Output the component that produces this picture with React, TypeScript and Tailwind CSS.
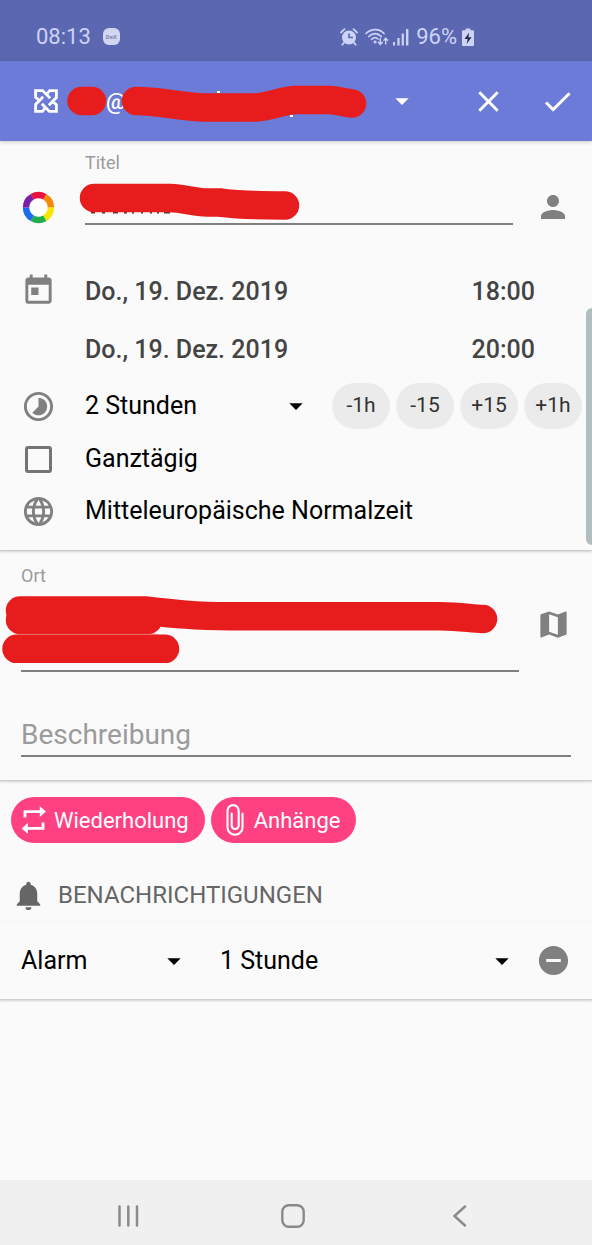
import type { ReactNode } from "react";
import {
  MdArrowDropDown,
  MdCheck,
  MdClose,
  MdLanguage,
  MdMap,
  MdNotifications,
  MdPerson,
  MdRemoveCircle,
  MdTimelapse,
  MdToday,
} from "react-icons/md";

function StatusBar() {
  return (
    <div className="flex h-[61px] items-center bg-[#5b68b1] px-9 pt-3 text-[22px] text-[#ccd3f4]">
      <span>08:13</span>
      <span className="ml-3 flex h-[17px] w-[17px] items-center justify-center rounded-md bg-[#d2d6f0] text-[6px] font-bold text-[#7d86b8]">
        DeX
      </span>
      <div className="ml-auto mr-[82px] flex items-center">
        <svg className="h-[18px] w-[18px]" viewBox="0 0 18 18" fill="currentColor" aria-hidden="true">
          <path
            fillRule="evenodd"
            d="M9 2.5a7 7 0 1 1 0 14a7 7 0 0 1 0-14ZM8.2 5.5V10.3H13V8.7H9.8V5.5Z"
          />
          <path
            d="M1 4.5L4.5 1.2M17 4.5L13.5 1.2M4.2 14.5L2.3 16.8M13.8 14.5L15.7 16.8"
            stroke="currentColor"
            strokeWidth="1.8"
            strokeLinecap="round"
          />
        </svg>
        <svg className="ml-[7px] h-[18px] w-6" viewBox="0 0 24 18" fill="none" stroke="currentColor" strokeWidth="1.7" strokeLinecap="round" aria-hidden="true">
          <path d="M1 5.5C6.5 .2 14.5 .2 19 5.5M3.8 8.5C7.6 4.6 12.6 4.6 16.2 8.5M6.6 11.3C8.8 9.3 11.2 9.3 13 11" />
          <circle cx="10" cy="14" r="1.2" fill="currentColor" strokeWidth="0.6" />
          <path d="M15.3 10.5V16M13.3 14.3L15.3 16.5L17.3 14.3M20.7 16V10.5M18.9 12.2L20.7 10.2L22.6 12.2" strokeWidth="1.4" />
        </svg>
        <svg className="ml-1 h-[18px] w-4" viewBox="0 0 16 18" fill="currentColor" aria-hidden="true">
          <rect x="0" y="14" width="2" height="3.5" />
          <rect x="4.4" y="10" width="2.2" height="7.5" />
          <rect x="8.7" y="5.5" width="2.2" height="12" />
          <rect x="13" y="1" width="2.4" height="16.5" />
        </svg>
        <span className="ml-[7px]">96%</span>
        <svg className="ml-[5px] h-[18px] w-3" viewBox="0 0 12 18" aria-hidden="true">
          <path d="M1 2.2H3.6V.5H8.4V2.2H11Q12 2.2 12 3.2V17Q12 18 11 18H1Q0 18 0 17V3.2Q0 2.2 1 2.2Z" fill="currentColor" />
          <path d="M7.2 4.5L2.5 11H5.7L4.6 16L9.6 9.2H6.4Z" fill="#272c4c" />
        </svg>
      </div>
    </div>
  );
}

function AccountLogo() {
  return (
    <svg className="h-6 w-6 shrink-0" viewBox="0 0 24 24" fill="none" stroke="#fff" strokeWidth="2.8" aria-hidden="true">
      {[0, 90, 180, 270].map((angle) => (
        <path key={angle} transform={`rotate(${angle} 12 12)`} d="M6.2 12L1.600 8.400V1.600H8.600L16.200 9.200" />
      ))}
    </svg>
  );
}

function AppBar() {
  return (
    <header className="relative z-10 flex h-20 items-center bg-[#6b7bd7] pl-[34px] pr-[17px] text-white shadow-[0_1px_4px_rgba(0,0,0,0.2)]">
      <AccountLogo />
      <div className="relative ml-2 flex h-12 flex-1 items-center">
        <select aria-label="Konto" className="h-full w-full appearance-none bg-transparent pl-10 text-[22px] font-medium outline-none">
          <option>@</option>
        </select>
        <MdArrowDropDown className="pointer-events-none absolute right-[6px] h-8 w-8" />
        <svg className="pointer-events-none absolute left-0 top-0 h-12 w-[304px]" viewBox="66 77 304 48" fill="none" stroke="#e71d1d" strokeWidth="28.5" strokeLinecap="round" strokeLinejoin="round" aria-hidden="true">
          <path d="M217 92h3M290 116h3" stroke="#fff" strokeWidth="2" strokeLinecap="butt" />
          <path d="M81.5 101H92" />
          <path d="M136 101C160 101 180 107 205 107.5H255C270 107 280 101 295 100H330C340 100.5 344 103 352 103.5" />
        </svg>
      </div>
      <button type="button" aria-label="Abbrechen" className="ml-[47px]">
        <MdClose className="h-[35px] w-[35px]" />
      </button>
      <button type="button" aria-label="Speichern" className="ml-[34px]">
        <MdCheck className="h-[35px] w-[35px]" />
      </button>
    </header>
  );
}

function Section({ children, className }: { children: ReactNode; className: string }) {
  return (
    <section className={`border-b border-[#cfcfcf] shadow-[0_1px_2px_rgba(0,0,0,0.16)] ${className}`}>
      {children}
    </section>
  );
}

function ColorWheel() {
  const colors = ["#f58a07", "#f7e600", "#1fae4b", "#1c6bf0", "#7a1fa8", "#ea1040"];
  return (
    <svg className="h-[35px] w-[35px]" viewBox="0 0 35 35" fill="none" strokeWidth="6.5" aria-hidden="true">
      <circle cx="17.5" cy="17.5" r="10" fill="#fff" />
      {colors.map((color, i) => (
        <path
          key={color}
          d="M23.7 6.7A12.4 12.4 0 0 1 29.9 17.5"
          stroke={color}
          transform={`rotate(${i * 60} 17.5 17.5)`}
        />
      ))}
    </svg>
  );
}

function DateRow({ label, date, time, icon }: { label: string; date: string; time: string; icon?: ReactNode }) {
  return (
    <div className="flex h-[58px] items-center pr-[57px] text-[25px] font-medium text-[#444]">
      <span className="w-[35px] shrink-0 pb-1 text-[#808080]">{icon}</span>
      <button type="button" aria-label={`${label} Datum`} className="ml-[29px]">
        {date}
      </button>
      <button type="button" aria-label={`${label} Uhrzeit`} className="ml-auto">
        {time}
      </button>
    </div>
  );
}

function Dropdown({ label, value, className }: { label: string; value: string; className: string }) {
  return (
    <div className={`relative flex items-center ${className}`}>
      <select aria-label={label} className="h-10 w-full appearance-none bg-transparent text-[25px] text-black outline-none">
        <option>{value}</option>
      </select>
      <MdArrowDropDown className="pointer-events-none absolute right-0 h-8 w-8 text-black" />
    </div>
  );
}

const steps = ["-1h", "-15", "+15", "+1h"];

function TimeSection() {
  return (
    <Section className="pb-[13px] pl-[21px] pt-3">
      <div className="flex items-end pr-[21px]">
        <button type="button" aria-label="Farbe">
          <ColorWheel />
        </button>
        <div className="relative ml-[29px] flex flex-1 flex-col">
          <label htmlFor="title" className="text-lg leading-5 text-[#9b9b9b]">
            Titel
          </label>
          <input id="title" className="h-[52px] w-full border-b-2 border-[#808080] bg-transparent text-[25px] outline-none" />
          <svg className="pointer-events-none absolute -left-[6px] top-[27px] h-[46px] w-[224px]" viewBox="79 180 224 46" fill="none" stroke="#e71d1d" strokeWidth="28.5" strokeLinecap="round" strokeLinejoin="round" aria-hidden="true">
            <path d="M91 212.500h4M102 212.500h3M113 212.500h5M124 212.500h3M132 212.500h2M141 212.500h2M150 212.500h2M157 212.500h2M164 212.500h6" stroke="#5a3030" strokeWidth="2" strokeLinecap="butt" />
            <path d="M94 198H170C185 198.5 192 202 208 202.500H220C232 204 240 205.500 285 205.500" />
          </svg>
        </div>
        <button type="button" aria-label="Kontakt" className="ml-[22px] text-[#808080]">
          <MdPerson className="h-9 w-9" />
        </button>
      </div>

      <div className="mt-[38px]">
        <DateRow label="Beginn" date="Do., 19. Dez. 2019" time="18:00" icon={<MdToday className="h-[35px] w-[35px]" />} />
        <DateRow label="Ende" date="Do., 19. Dez. 2019" time="20:00" />
      </div>

      <div className="flex h-[54px] items-center pr-[10px]">
        <MdTimelapse className="h-[35px] w-[35px] shrink-0 text-[#808080]" />
        <Dropdown label="Dauer" value="2 Stunden" className="ml-[29px] flex-1" />
        <div className="ml-5 flex gap-[6px]">
          {steps.map((step) => (
            <button key={step} type="button" className="h-[46px] w-[58px] rounded-full bg-[#ebebeb] text-[21px] text-[#333]">
              {step}
            </button>
          ))}
        </div>
      </div>

      <label className="flex h-[52px] items-center text-[25px] text-black">
        <input type="checkbox" className="ml-1 mr-[33px] h-[27px] w-[27px] appearance-none rounded-[3px] border-[3px] border-[#757575] checked:bg-[#757575]" />
        Ganztägig
      </label>

      <button type="button" className="flex h-[52px] w-full items-center text-[25px] text-black">
        <MdLanguage className="mr-[29px] h-[35px] w-[35px] text-[#808080]" />
        Mitteleuropäische Normalzeit
      </button>
    </Section>
  );
}

function PlaceSection() {
  return (
    <Section className="px-[21px] pb-[23px] pt-[15px]">
      <div className="flex items-end">
        <div className="relative flex flex-1 flex-col">
          <label htmlFor="place" className="text-lg leading-5 text-[#9b9b9b]">
            Ort
          </label>
          <textarea id="place" className="block h-[86px] w-full resize-none border-b-2 border-[#808080] bg-transparent text-[25px] outline-none" />
          <svg className="pointer-events-none absolute -left-[21px] top-[28px] h-[72px] w-[500px]" viewBox="0 594 500 72" fill="none" stroke="#e71d1d" strokeWidth="28.5" strokeLinecap="round" strokeLinejoin="round" aria-hidden="true">
            <path d="M20 610.5H145C175 614 195 616.2 230 616.2H440C460 616.2 470 618.5 483 619" />
            <path d="M20 620H148" />
            <path d="M16.5 648.8H165" />
            <path d="M19 634.4H158" stroke="#f06a6a" strokeWidth="1" />
          </svg>
        </div>
        <button type="button" aria-label="Karte" className="mb-[30px] ml-[17px] text-[#808080]">
          <MdMap className="h-[35px] w-[35px]" />
        </button>
      </div>
      <input
        aria-label="Beschreibung"
        placeholder="Beschreibung"
        className="mt-[43px] block h-[42px] w-full border-b-2 border-[#808080] bg-transparent text-[28px] outline-none placeholder:text-[#9b9b9b]"
      />
    </Section>
  );
}

function RepeatIcon() {
  return (
    <svg className="h-[30px] w-[26px]" viewBox="0 0 26 30" fill="#fff" aria-hidden="true">
      <path d="M4 12.5V6.6H19.5M22 17.5V23.4H6" fill="none" stroke="#fff" strokeWidth="2.8" />
      <path d="M18.8 1.3L25 6.6L18.8 12ZM6.800 18L.6 23.4L6.8 28.7Z" />
    </svg>
  );
}

function ClipIcon() {
  return (
    <svg className="h-8 w-[18px]" viewBox="0 0 18 32" fill="none" stroke="#fff" strokeWidth="2.1" strokeLinecap="round" aria-hidden="true">
      <path d="M16.5 9.5V23.3A7.5 7.5 0 0 1 1.5 23.3V6.7A5.6 5.6 0 0 1 12.7 6.7V21.5A3.5 3.5 0 0 1 5.7 21.5V9.5" />
    </svg>
  );
}

function ReminderSection() {
  const chip = "flex h-[46px] items-center rounded-full bg-[#ff4081] text-[22px] text-white";
  return (
    <Section className="pt-4">
      <div className="flex gap-[6px] pl-[11px]">
        <button type="button" className={`${chip} pl-[10px] pr-4`}>
          <RepeatIcon />
          <span className="ml-[7px]">Wiederholung</span>
        </button>
        <button type="button" className={`${chip} pl-[15px] pr-4`}>
          <ClipIcon />
          <span className="ml-[10px]">Anhänge</span>
        </button>
      </div>
      <h2 className="mt-[26px] flex h-[52px] items-center pl-[11px] text-2xl text-[#666]">
        <MdNotifications className="mr-3 h-[35px] w-[35px]" />
        BENACHRICHTIGUNGEN
      </h2>
      <div className="flex h-[78px] items-center border-t border-[#f6f6f6] pl-[21px] pr-[21px]">
        <Dropdown label="Art" value="Alarm" className="w-[169px]" />
        <Dropdown label="Vorlauf" value="1 Stunde" className="ml-[30px] flex-1" />
        <button type="button" aria-label="Entfernen" className="ml-[18px] text-[#808080]">
          <MdRemoveCircle className="h-[35px] w-[35px]" />
        </button>
      </div>
    </Section>
  );
}

function NavigationBar() {
  return (
    <nav className="flex h-[65px] items-center justify-between bg-[#f0f0f0] pl-[116px] pr-[122px] pt-[6px] text-[#8a8a8a]">
      <button type="button" aria-label="Letzte Apps">
        <svg className="h-6 w-6" viewBox="0 0 24 24" stroke="currentColor" strokeWidth="2.5" strokeLinecap="round">
          <path d="M3.5 2.5V21.5M12.3 2.5V21.5M21 2.5V21.5" />
        </svg>
      </button>
      <button type="button" aria-label="Startbildschirm">
        <svg className="h-6 w-6" viewBox="0 0 24 24" fill="none" stroke="currentColor" strokeWidth="2.4">
          <rect x="1.3" y="1.3" width="21.4" height="21.4" rx="6.5" />
        </svg>
      </button>
      <button type="button" aria-label="Zurück">
        <svg className="h-6 w-6" viewBox="0 0 24 24" fill="none" stroke="currentColor" strokeWidth="2.5" strokeLinecap="round">
          <path d="M19 2.5L8.500 12L19 21.5" />
        </svg>
      </button>
    </nav>
  );
}

export default function App() {
  return (
    <div className="relative flex min-h-screen flex-col bg-[#fafafa] font-['Roboto',sans-serif]">
      <StatusBar />
      <AppBar />
      <main className="flex-1">
        <TimeSection />
        <PlaceSection />
        <ReminderSection />
      </main>
      <div className="absolute right-0 top-[308px] h-[237px] w-[6px] rounded-l-md bg-[#b2bebe]" aria-hidden="true" />
      <NavigationBar />
    </div>
  );
}
